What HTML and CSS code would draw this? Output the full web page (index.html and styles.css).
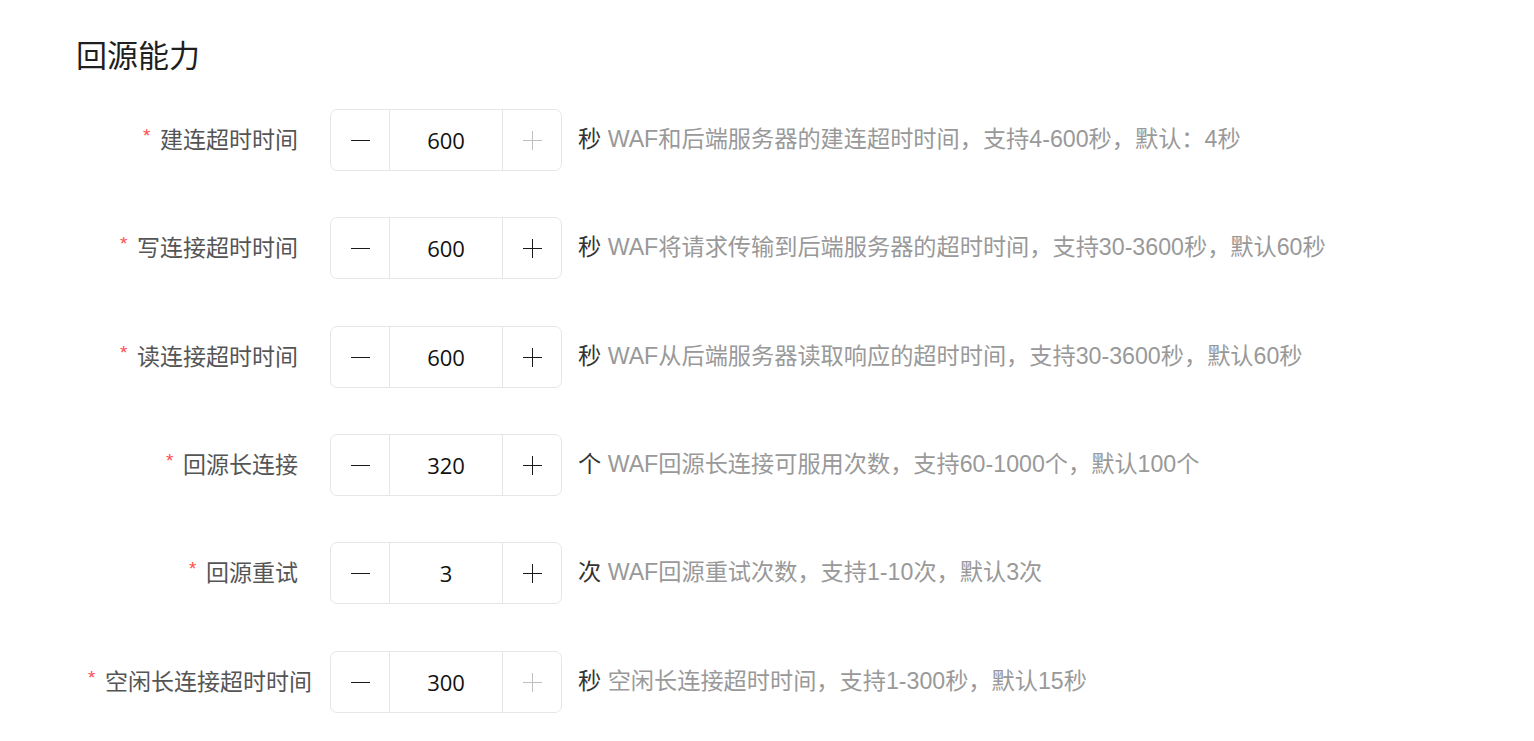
FILE: index.html
```html
<!DOCTYPE html>
<html lang="zh-CN">
<head>
<meta charset="utf-8">
<link rel="stylesheet" href="styles.css">
</head>
<body>
<div class="page">
  <h2 class="title">回源能力</h2>
  <div class="form">
    <div class="row">
      <div class="label"><span class="req">*</span>建连超时时间</div>
      <div class="stepper">
        <div class="btn"><span class="minus"></span></div>
        <div class="value">600</div>
        <div class="btn disabled"><span class="plus"></span></div>
      </div>
      <div class="desc"><span class="unit">秒</span> WAF和后端服务器的建连超时时间，支持4-600秒，默认：4秒</div>
    </div>
    <div class="row">
      <div class="label"><span class="req">*</span>写连接超时时间</div>
      <div class="stepper">
        <div class="btn"><span class="minus"></span></div>
        <div class="value">600</div>
        <div class="btn"><span class="plus"></span></div>
      </div>
      <div class="desc"><span class="unit">秒</span> WAF将请求传输到后端服务器的超时时间，支持30-3600秒，默认60秒</div>
    </div>
    <div class="row">
      <div class="label"><span class="req">*</span>读连接超时时间</div>
      <div class="stepper">
        <div class="btn"><span class="minus"></span></div>
        <div class="value">600</div>
        <div class="btn"><span class="plus"></span></div>
      </div>
      <div class="desc"><span class="unit">秒</span> WAF从后端服务器读取响应的超时时间，支持30-3600秒，默认60秒</div>
    </div>
    <div class="row">
      <div class="label"><span class="req">*</span>回源长连接</div>
      <div class="stepper">
        <div class="btn"><span class="minus"></span></div>
        <div class="value">320</div>
        <div class="btn"><span class="plus"></span></div>
      </div>
      <div class="desc"><span class="unit">个</span> WAF回源长连接可服用次数，支持60-1000个，默认100个</div>
    </div>
    <div class="row">
      <div class="label"><span class="req">*</span>回源重试</div>
      <div class="stepper">
        <div class="btn"><span class="minus"></span></div>
        <div class="value">3</div>
        <div class="btn"><span class="plus"></span></div>
      </div>
      <div class="desc"><span class="unit">次</span> WAF回源重试次数，支持1-10次，默认3次</div>
    </div>
    <div class="row">
      <div class="label"><span class="req">*</span>空闲长连接超时时间</div>
      <div class="stepper">
        <div class="btn"><span class="minus"></span></div>
        <div class="value">300</div>
        <div class="btn disabled"><span class="plus"></span></div>
      </div>
      <div class="desc"><span class="unit">秒</span> 空闲长连接超时时间，支持1-300秒，默认15秒</div>
    </div>
  </div>
</div>
</body>
</html>
```
FILE: styles.css
```css
html, body {
  margin: 0;
  padding: 0;
  background: #fff;
}
body {
  font-family: "Liberation Sans", "Noto Sans CJK SC", sans-serif;
  color: #333;
}
.page {
  padding: 33px 0 0 76px;
}
.title {
  margin: 0;
  font-family: "Noto Sans CJK SC", sans-serif;
  font-size: 31px;
  line-height: 42px;
  font-weight: 400;
  color: #1f1f1f;
}
.form {
  display: flex;
  flex-direction: column;
  gap: 46px;
  margin-top: 34px;
}
.row {
  display: flex;
  align-items: center;
  height: 62px;
}
.row:nth-child(3n) {
  margin-top: 1px;
}
.label {
  flex: none;
  width: 210px;
  margin-left: 12px;
  margin-right: 32px;
  padding-bottom: 5px;
  text-align: right;
  font-family: "Noto Sans CJK SC", sans-serif;
  font-size: 23px;
  line-height: 32px;
  color: #555;
  white-space: nowrap;
}
.req {
  display: inline-block;
  width: 17px;
  text-align: left;
  color: #ff4d4f;
  font-family: "Liberation Sans", sans-serif;
  font-size: 19px;
  line-height: 1;
  vertical-align: 6px;
}
.stepper {
  flex: none;
  display: flex;
  width: 232px;
  height: 62px;
  box-sizing: border-box;
  border: 1px solid #e6e6e6;
  border-radius: 7px;
}
.btn {
  width: 58px;
  display: flex;
  align-items: center;
  justify-content: center;
}
.value {
  flex: 1;
  border-left: 1px solid #e6e6e6;
  border-right: 1px solid #e6e6e6;
  display: flex;
  align-items: center;
  justify-content: center;
  font-family: "Open Sans", "Noto Sans", sans-serif;
  font-size: 22px;
  color: #111;
}
.minus, .plus {
  display: block;
  width: 19px;
  height: 19px;
  position: relative;
}
.minus::before, .plus::before, .plus::after {
  content: "";
  position: absolute;
  background: #1a1a1a;
}
.minus::before, .plus::before {
  left: 0;
  right: 0;
  top: 9px;
  height: 1px;
}
.plus::after {
  top: 0;
  bottom: 0;
  left: 9px;
  width: 1px;
}
.disabled .plus::before, .disabled .plus::after {
  background: #bfbfbf;
}
.desc {
  margin-left: 16px;
  padding-bottom: 5px;
  font-size: 23.2px;
  line-height: 32px;
  color: #999;
  white-space: nowrap;
}
.unit {
  color: #333;
  font-family: "Noto Sans CJK SC", sans-serif;
}
```
